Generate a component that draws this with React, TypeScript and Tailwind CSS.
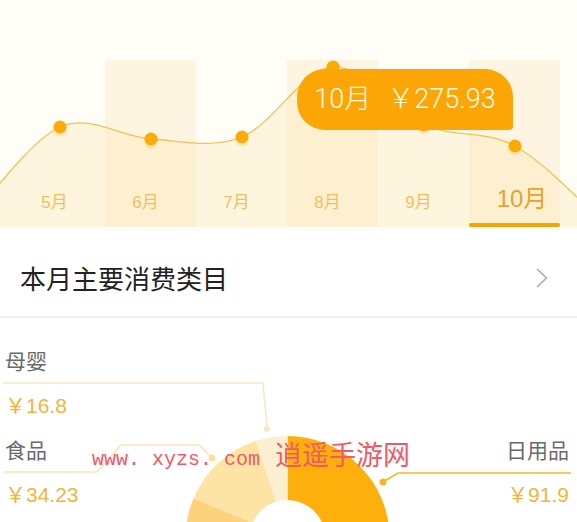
import React from 'react';

const months = [
  { label: '5月', band: false },
  { label: '6月', band: true },
  { label: '7月', band: false },
  { label: '8月', band: true },
  { label: '9月', band: false },
  { label: '10月', band: true, active: true },
];

const curvePoints: [number, number][] = [
  [-31, 220],
  [60, 127],
  [151, 139],
  [242, 137],
  [333, 67],
  [424, 125],
  [515, 146],
  [606, 225],
];

const buildCurve = (pts: [number, number][]) => {
  let d = `M ${pts[0][0]} ${pts[0][1]}`;
  for (let i = 0; i < pts.length - 1; i++) {
    const p0 = pts[Math.max(i - 1, 0)];
    const p1 = pts[i];
    const p2 = pts[i + 1];
    const p3 = pts[Math.min(i + 2, pts.length - 1)];
    const c1x = p1[0] + (p2[0] - p0[0]) / 6;
    const c1y = p1[1] + (p2[1] - p0[1]) / 6;
    const c2x = p2[0] - (p3[0] - p1[0]) / 6;
    const c2y = p2[1] - (p3[1] - p1[1]) / 6;
    d += ` C ${c1x} ${c1y} ${c2x} ${c2y} ${p2[0]} ${p2[1]}`;
  }
  return d;
};

// annular sector, angles in degrees clockwise from 12 o'clock
const sector = (cx: number, cy: number, R: number, r: number, a0: number, a1: number) => {
  const pt = (rad: number, a: number) => {
    const t = ((a - 90) * Math.PI) / 180;
    return [cx + rad * Math.cos(t), cy + rad * Math.sin(t)];
  };
  const large = a1 - a0 > 180 ? 1 : 0;
  const [x0, y0] = pt(R, a0);
  const [x1, y1] = pt(R, a1);
  const [x2, y2] = pt(r, a1);
  const [x3, y3] = pt(r, a0);
  return `M ${x0} ${y0} A ${R} ${R} 0 ${large} 1 ${x1} ${y1} L ${x2} ${y2} A ${r} ${r} 0 ${large} 0 ${x3} ${y3} Z`;
};

const TrendChart = () => {
  const curve = buildCurve(curvePoints);
  return (
    <div className="relative h-[230px] bg-[#fffdf6]">
      <div className="flex h-[227px] pt-[60px] ml-[14px] w-[546px]">
        {months.map((m) => (
          <div
            key={m.label}
            className={`flex-1 flex flex-col justify-end items-center ${m.band ? 'bg-[#fdf5e1]' : ''}`}
          >
            {m.active ? (
              <>
                <span className="relative z-10 pl-[15px] text-[24px] leading-[30px] text-[#e9a22c]">{m.label}</span>
                <div className="relative z-10 mt-[9px] h-[4px] w-full rounded-full bg-[#f3a405]" />
              </>
            ) : (
              <span className="relative z-10 pr-[10px] mb-[12px] text-[17px] leading-[24px] text-[#efc060]">
                {m.label}
              </span>
            )}
          </div>
        ))}
      </div>

      <svg className="absolute inset-0 pointer-events-none" width="577" height="230" viewBox="0 0 577 230">
        <path d={`${curve} L 606 227 L -31 227 Z`} fill="#fbe2a4" fillOpacity="0.28" />
        <path d={curve} fill="none" stroke="#f2c152" strokeWidth="1.3" />
        {curvePoints.slice(1, 7).map(([x, y]) => (
          <g key={x}>
            <circle cx={x} cy={y + 2.5} r="7" fill="#f7c350" fillOpacity="0.3" />
            <circle cx={x} cy={y} r="6.5" fill="#fbab06" />
          </g>
        ))}
      </svg>

      <div className="absolute left-[297px] top-[69px] h-[61px] w-[216px] rounded-[28px] rounded-br-[4px] bg-[#fba605] flex items-center justify-center gap-[16px] text-[#fffbea] text-[27px] font-light font-['Roboto','Noto_Sans_CJK_SC',sans-serif]">
        <span>10月</span>
        <span>￥275.93</span>
      </div>
    </div>
  );
};

const CategoryBreakdown = () => {
  const cx = 287.5;
  const cy = 220;
  return (
    <div className="relative h-[204px] overflow-hidden text-[21px] leading-[28px]">
      <svg className="absolute inset-0" width="577" height="204" viewBox="0 0 577 204">
        <path d={sector(cx, cy, 102, 38, 0, 180)} fill="#fdb00c" />
        <path d={sector(cx, cy, 102, 38, -18, 0)} fill="#fbefd2" />
        <path d={sector(cx, cy, 102, 38, -67, -18)} fill="#fde4a5" />
        <path d={sector(cx, cy, 102, 38, -180, -67)} fill="#fdd27c" />

        <polyline points="3,65 263,65 267,110" fill="none" stroke="#fbe6c2" strokeWidth="1.6" />
        <circle cx="267" cy="111" r="3" fill="#fbe6c2" />

        <polyline points="3,154 97,154 121,127 199,127 212,140" fill="none" stroke="#fde5ad" strokeWidth="1.6" />
        <circle cx="212" cy="140" r="3.5" fill="#fde0a0" />

        <polyline points="383,164 398,155 571,155" fill="none" stroke="#f5b52c" strokeWidth="1.6" />
        <circle cx="383" cy="164" r="3.5" fill="#f5b52c" />
      </svg>

      <div className="relative flex flex-col pl-[5px] pr-[8px] font-['Liberation_Sans','Noto_Sans_CJK_SC',sans-serif]">
        <div className="mt-[30px] h-[28px] text-[#6a6a6a]">母婴</div>
        <div className="mt-[16px] h-[28px] text-[#f2b53b]">￥16.8</div>
        <div className="mt-[17px] h-[28px] flex justify-between text-[#6a6a6a]">
          <span>食品</span>
          <span>日用品</span>
        </div>
        <div className="mt-[16px] h-[28px] flex justify-between text-[#f2b53b]">
          <span>￥34.23</span>
          <span>￥91.9</span>
        </div>
      </div>

      <div className="absolute left-[92px] top-[122px] flex items-baseline text-[#f05a68] leading-none">
        <span className="font-['Liberation_Mono',monospace] text-[20px]">www. xyzs. com</span>
        <span className="ml-[15px] font-['Noto_Sans_CJK_SC',sans-serif] text-[27px]">逍遥手游网</span>
      </div>
    </div>
  );
};

export default function App() {
  return (
    <div className="w-[577px] h-[522px] overflow-hidden bg-white font-['Liberation_Sans','Noto_Sans_CJK_SC',sans-serif]">
      <TrendChart />
      <div className="flex h-[86px] items-center justify-between pt-[9px] pl-[20px] pr-[29px]">
        <span className="text-[26px] text-[#222222] font-['Noto_Sans_CJK_SC',sans-serif]">本月主要消费类目</span>
        <svg width="12" height="20" viewBox="0 0 12 20">
          <polyline points="1,1 10.5,10 1,19" fill="none" stroke="#a8a8a8" strokeWidth="1.5" />
        </svg>
      </div>
      <div className="h-[2px] bg-[#efefef]" />
      <CategoryBreakdown />
    </div>
  );
}
